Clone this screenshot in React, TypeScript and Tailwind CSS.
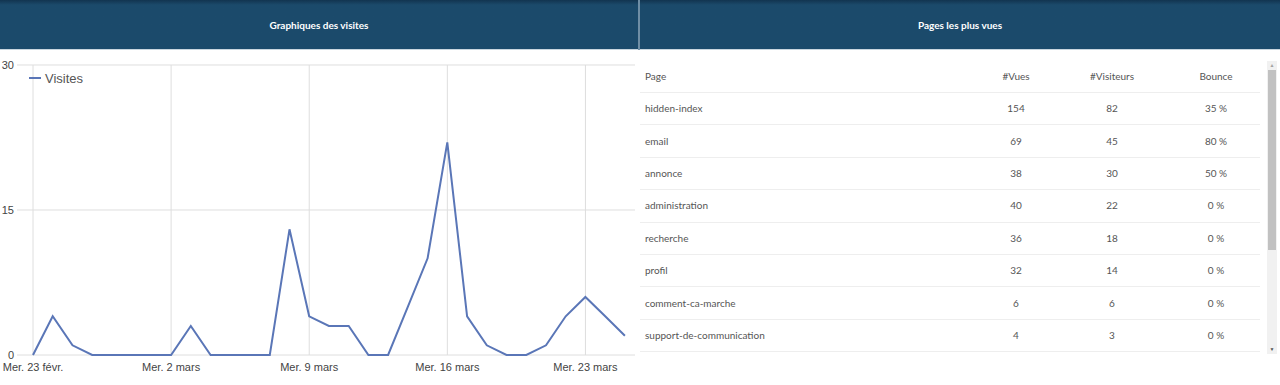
const visits = [0, 4, 1, 0, 0, 0, 0, 0, 3, 0, 0, 0, 0, 13, 4, 3, 3, 0, 0, 5, 10, 22, 4, 1, 0, 0, 1, 4, 6, 4, 2]

const rows = [
  { page: "hidden-index", vues: 154, visiteurs: 82, bounce: "35 %" },
  { page: "email", vues: 69, visiteurs: 45, bounce: "80 %" },
  { page: "annonce", vues: 38, visiteurs: 30, bounce: "50 %" },
  { page: "administration", vues: 40, visiteurs: 22, bounce: "0 %" },
  { page: "recherche", vues: 36, visiteurs: 18, bounce: "0 %" },
  { page: "profil", vues: 32, visiteurs: 14, bounce: "0 %" },
  { page: "comment-ca-marche", vues: 6, visiteurs: 6, bounce: "0 %" },
  { page: "support-de-communication", vues: 4, visiteurs: 3, bounce: "0 %" },
]

const xOf = (i: number) => 33 + i * 19.73
const yOf = (v: number) => 305 - v * 9.667

function PanelHeader({ title }: { title: string }) {
  return (
    <div className="h-[50px] bg-[#1b4a6b] bg-gradient-to-b from-[#123450] from-0% via-[#1b4a6b] via-[10%] to-[#1b4a6b] flex items-center justify-center border-b border-[#c9d6df]">
      <span className="text-white font-bold text-[10px] pt-[1px]">{title}</span>
    </div>
  )
}

function VisitsChart() {
  const points = visits.map((v, i) => `${xOf(i).toFixed(1)},${yOf(v).toFixed(1)}`).join(" ")
  const xTicks = [
    { i: 0, label: "Mer. 23 févr." },
    { i: 7, label: "Mer. 2 mars" },
    { i: 14, label: "Mer. 9 mars" },
    { i: 21, label: "Mer. 16 mars" },
    { i: 28, label: "Mer. 23 mars" },
  ]
  const yTicks = [30, 15, 0]
  return (
    <svg width="638" height="335" className="block" style={{ fontFamily: "'Liberation Sans', Arial, sans-serif" }}>
      {yTicks.map((t) => (
        <g key={t}>
          <line x1="17" x2="635" y1={yOf(t)} y2={yOf(t)} stroke="#dedede" strokeWidth="1" />
          <text x="14" y={yOf(t) + 4} textAnchor="end" fontSize="11" fill="#444">
            {t}
          </text>
        </g>
      ))}
      {xTicks.map((t) => (
        <g key={t.i}>
          <line x1={xOf(t.i)} x2={xOf(t.i)} y1={yOf(30)} y2={yOf(0)} stroke="#dedede" strokeWidth="1" />
          <text x={xOf(t.i)} y="321" textAnchor="middle" fontSize="11" fill="#444">
            {t.label}
          </text>
        </g>
      ))}
      <polyline points={points} fill="none" stroke="#5a76b7" strokeWidth="2" strokeLinejoin="miter" />
      <line x1="29" x2="41" y1="28" y2="28" stroke="#5a76b7" strokeWidth="2" />
      <text x="45" y="33" fontSize="13" fill="#555">
        Visites
      </text>
    </svg>
  )
}

function FakeScrollbar() {
  return (
    <div className="w-[10px] h-[293px] bg-[#f1f1f1] flex flex-col items-center">
      <div className="h-[9px] flex items-center justify-center text-[5px] leading-none text-[#a3a3a3]">▲</div>
      <div className="w-[8px] h-[180px] bg-[#c1c1c1]" />
      <div className="flex-1" />
      <div className="h-[9px] flex items-center justify-center text-[5px] leading-none text-[#505050]">▼</div>
    </div>
  )
}

function PagesTable() {
  return (
    <div className="w-[620px] h-[293px] overflow-hidden text-[10px] text-[#555]">
      <div className="grid grid-cols-[340px_72px_120px_88px] h-[32px] items-center border-b border-[#eeeeee]">
        <div className="pl-[5px]">Page</div>
        <div className="text-center">#Vues</div>
        <div className="text-center">#Visiteurs</div>
        <div className="text-center">Bounce</div>
      </div>
      {rows.map((r) => (
        <div key={r.page} className="grid grid-cols-[340px_72px_120px_88px] h-[32.4px] items-center border-b border-[#eeeeee]">
          <div className="pl-[5px]">{r.page}</div>
          <div className="text-center">{r.vues}</div>
          <div className="text-center">{r.visiteurs}</div>
          <div className="text-center">{r.bounce}</div>
        </div>
      ))}
    </div>
  )
}

export default function App() {
  return (
    <div className="w-[1280px] h-[385px] bg-white flex overflow-hidden" style={{ fontFamily: "Lato, 'Liberation Sans', sans-serif" }}>
      <div className="w-[638px] flex flex-col">
        <PanelHeader title="Graphiques des visites" />
        <VisitsChart />
      </div>
      <div className="w-[2px] h-[50px] bg-[#6f8ea5]" />
      <div className="w-[640px] flex flex-col">
        <PanelHeader title="Pages les plus vues" />
        <div className="flex pt-[11px]">
          <PagesTable />
          <div className="ml-[7px]">
            <FakeScrollbar />
          </div>
        </div>
      </div>
    </div>
  )
}
